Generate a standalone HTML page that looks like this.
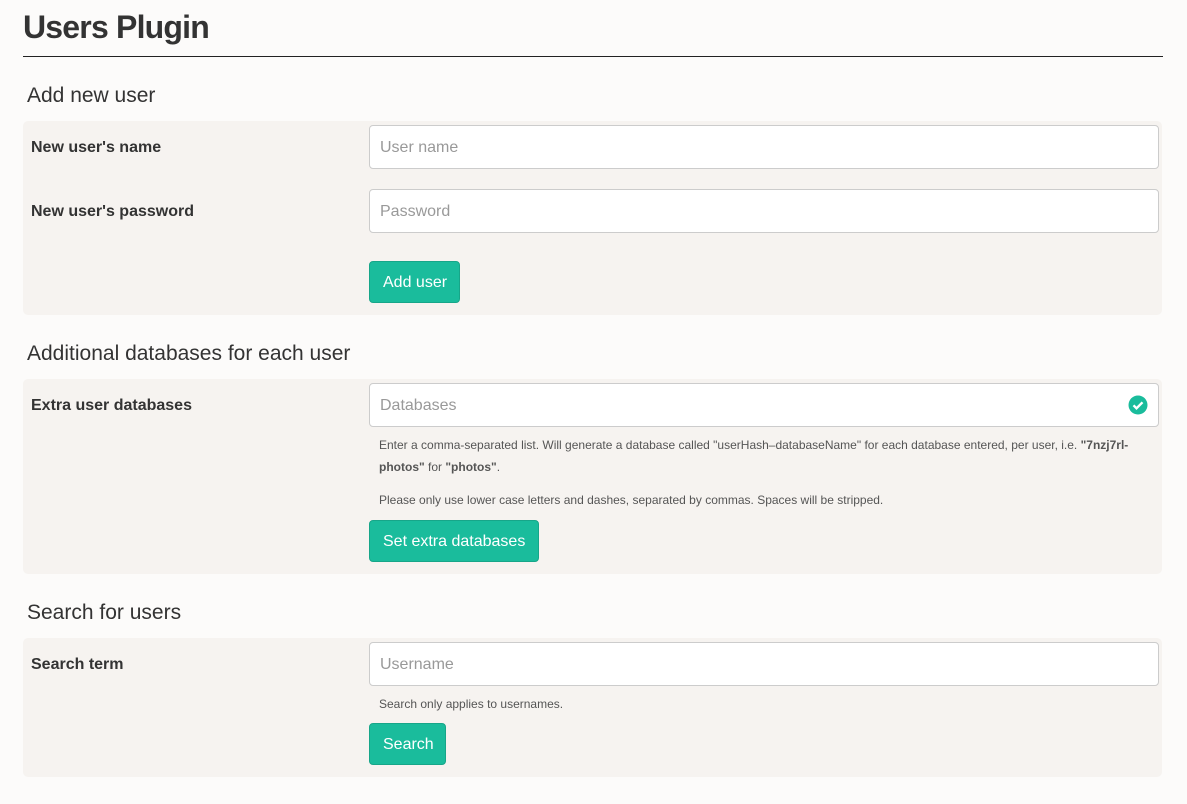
<!DOCTYPE html>
<html><head><style>
body{margin:0;background:#fcfbfa;font-family:"Liberation Sans",Arial,sans-serif;color:#333;width:1187px;height:804px;position:relative;overflow:hidden}
div,span{position:absolute;box-sizing:border-box}
.h1{left:23px;top:9px;font-size:32px;font-weight:bold;color:#333;letter-spacing:-0.8px}
.rule{left:23px;top:56px;width:1140px;height:1px;background:#222}
.h2{left:27px;font-size:21px;color:#333}
.panel{left:23px;width:1139px;background:#f6f3f0;border-radius:5px}
.lab{left:31px;font-size:16px;font-weight:bold;color:#333}
.inp{left:369px;width:790px;height:44px;background:#fff;border:1px solid #ccc;border-radius:4px;font-size:16px;color:#999;padding:13px 0 0 10px}
.btn{left:369px;height:42px;background:#1abc9c;border:1px solid #17a689;border-radius:4px;color:#fff;font-size:16px;padding:12px 0 0 13px;white-space:nowrap}
.help{left:379px;font-size:12px;color:#555;white-space:nowrap}
</style></head><body>
<div class="h1">Users Plugin</div>
<div class="rule"></div>

<div class="h2" style="top:84px">Add new user</div>
<div class="panel" style="top:121px;height:194px"></div>
<div class="lab" style="top:139px">New user's name</div>
<div class="inp" style="top:125px">User name</div>
<div class="lab" style="top:203px">New user's password</div>
<div class="inp" style="top:189px">Password</div>
<div class="btn" style="top:261px;width:91px">Add user</div>

<div class="h2" style="top:342px">Additional databases for each user</div>
<div class="panel" style="top:379px;height:195px"></div>
<div class="lab" style="top:397px">Extra user databases</div>
<div class="inp" style="top:383px">Databases</div>
<svg style="position:absolute;left:1128px;top:395px" width="20" height="20" viewBox="0 0 20 20"><circle cx="10" cy="10" r="9.5" fill="#1abc9c"/><path d="M5.5 10.3l3 3 6-6" stroke="#fff" stroke-width="2.4" fill="none"/></svg>
<div class="help" style="top:438px">Enter a comma-separated list. Will generate a database called "userHash–databaseName" for each database entered, per user, i.e. <b>"7nzj7rl-</b></div>
<div class="help" style="top:460px"><b>photos"</b> for <b>"photos"</b>.</div>
<div class="help" style="top:493px">Please only use lower case letters and dashes, separated by commas. Spaces will be stripped.</div>
<div class="btn" style="top:520px;width:170px">Set extra databases</div>

<div class="h2" style="top:601px">Search for users</div>
<div class="panel" style="top:638px;height:139px"></div>
<div class="lab" style="top:656px">Search term</div>
<div class="inp" style="top:642px">Username</div>
<div class="help" style="top:697px">Search only applies to usernames.</div>
<div class="btn" style="top:723px;width:77px">Search</div>
</body></html>
